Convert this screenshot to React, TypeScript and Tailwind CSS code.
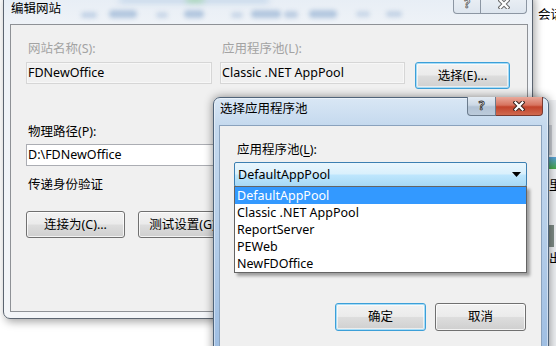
import React from "react";

const btnBase =
  "flex items-center justify-center whitespace-nowrap rounded-[3px] border bg-[linear-gradient(#f2f2f2_0%,#ebebeb_48%,#dddddd_52%,#cfcfcf_100%)]";
const btnNormal = btnBase + " border-[#707070] shadow-[inset_0_0_0_1px_rgba(255,255,255,0.75)]";
const btnFocus =
  btnBase + " border-[#3c9fd8] shadow-[inset_0_0_0_1px_#a6dcf7,inset_0_0_0_2px_rgba(255,255,255,0.6)]";

function XGlyph({ outline, fill }: { outline: string; fill: string }) {
  return (
    <svg width="12" height="10" viewBox="0 0 12 10">
      <path d="M2.5 1.5 L9.5 8.5 M9.5 1.5 L2.5 8.5" stroke={outline} strokeWidth="4.2" strokeLinecap="square" fill="none" />
      <path d="M2.5 1.5 L9.5 8.5 M9.5 1.5 L2.5 8.5" stroke={fill} strokeWidth="2.2" strokeLinecap="square" fill="none" />
    </svg>
  );
}

function OuterWindow() {
  return (
    <div className="absolute left-[3px] top-[-8px] flex h-[327px] w-[530px] flex-col overflow-hidden rounded-[7px] border border-[#5b6470] bg-[linear-gradient(180deg,#e6edf5_0px,#eef2f7_30px,#f3f5f8_100%)] shadow-[2px_3px_9px_rgba(0,0,0,0.35)]">
      {/* glass blur decoration */}
      <div className="absolute left-[115px] top-[4px] h-[6px] w-[150px] rounded-full bg-[#c3d6ea] blur-[3px]" />
      <div className="absolute left-[182px] top-[4px] h-[5px] w-[18px] rounded-full bg-[#9fd6a8] blur-[3px]" />
      <div className="absolute left-[77px] top-[19px] h-[6px] w-[16px] rounded-full bg-[#c2d2e6] blur-[2px]" />
      <div className="absolute left-[105px] top-[17px] h-[8px] w-[28px] rounded-full bg-[#b3c7df] blur-[2px]" />
      <div className="absolute left-[152px] top-[19px] h-[6px] w-[12px] rounded-full bg-[#c9d7e8] blur-[2px]" />
      <div className="absolute left-[180px] top-[17px] h-[8px] w-[20px] rounded-full bg-[#b3c7df] blur-[2px]" />
      <div className="absolute left-[227px] top-[19px] h-[6px] w-[12px] rounded-full bg-[#c9d7e8] blur-[2px]" />
      <div className="absolute left-[247px] top-[17px] h-[8px] w-[30px] rounded-full bg-[#b3c7df] blur-[2px]" />
      <div className="absolute left-[280px] top-[18px] h-[7px] w-[14px] rounded-full bg-[#bccde2] blur-[2px]" />
      <div className="absolute left-[305px] top-[17px] h-[8px] w-[28px] rounded-full bg-[#b3c7df] blur-[2px]" />
      <div className="absolute left-[352px] top-[18px] h-[6px] w-[14px] rounded-full bg-[#c9d7e8] blur-[2px]" />
      <div className="absolute left-[382px] top-[18px] h-[6px] w-[16px] rounded-full bg-[#c3d2e5] blur-[2px]" />

      {/* title bar */}
      <div className="relative flex h-[31px] shrink-0 items-start pl-[7px] pr-[5px]">
        <span className="pt-[8px] whitespace-nowrap leading-[16px] text-black">编辑网站</span>
        <div className="ml-auto flex h-[21px]">
          <div className="flex w-[28px] items-end justify-center rounded-bl-[4px] border border-t-0 border-[#8c96a3] bg-[linear-gradient(#eef2f7,#dde5ee)] pb-[3px]">
            <span className="text-[12px] font-bold leading-[12px] text-white [-webkit-text-stroke:0.8px_#606060]">?</span>
          </div>
          <div className="flex w-[46px] items-end justify-center rounded-br-[4px] border border-l-0 border-t-0 border-[#8c96a3] bg-[linear-gradient(#eef2f7,#dde5ee)] pb-[4px]">
            <XGlyph outline="#6a6a6a" fill="#ffffff" />
          </div>
        </div>
      </div>

      {/* client area */}
      <div className="relative ml-[6px] mr-[4px] h-[288px] shrink-0 border border-[#8e9196] bg-[#f0f0f0] pl-[15px] pt-[16px] leading-[16px]">
        <div className="flex items-start">
          <div className="flex w-[186px] flex-col">
            <span className="ml-[2px] h-[16px] whitespace-nowrap text-[#a3a3a3]">网站名称(S):</span>
            <div className="mt-[5px] flex h-[22px] items-center border border-[#d6d6d6] bg-[#f0f0f0] pl-[1px] shadow-[inset_0_0_0_1px_#f7f7f7]">
              FDNewOffice
            </div>
          </div>
          <div className="ml-[8px] flex w-[185px] flex-col">
            <span className="ml-[2px] h-[16px] whitespace-nowrap text-[#a3a3a3]">应用程序池(L):</span>
            <div className="mt-[5px] flex h-[22px] items-center border border-[#d6d6d6] bg-[#f0f0f0] pl-[1px] shadow-[inset_0_0_0_1px_#f7f7f7]">
              Classic .NET AppPool
            </div>
          </div>
          <div className={"ml-[10px] mt-[21px] h-[27px] w-[95px] " + btnFocus}>选择(E)...</div>
        </div>

        <div className="ml-[2px] mt-[35px] h-[16px] whitespace-nowrap">物理路径(P):</div>
        <div className="mt-[4px] flex h-[22px] w-[379px] items-center border border-[#abadb3] bg-white pl-[1px]">
          D:\FDNewOffice
        </div>
        <div className="ml-[2px] mt-[11px] h-[16px] whitespace-nowrap">传递身份验证</div>
        <div className="mt-[18px] flex gap-[13px]">
          <div className={"h-[27px] w-[99px] " + btnNormal}>连接为(C)...</div>
          <div className={"h-[27px] w-[99px] " + btnNormal}>测试设置(G)...</div>
        </div>
      </div>
    </div>
  );
}

function InnerDialog() {
  const items = ["DefaultAppPool", "Classic .NET AppPool", "ReportServer", "PEWeb", "NewFDOffice"];
  return (
    <div className="absolute left-[213px] top-[97px] flex h-[262px] w-[336px] flex-col rounded-t-[7px] border border-[#4f6379] bg-[linear-gradient(180deg,#d9e7f5_0px,#c5d9ee_27px,#b8d0ea_120px,#9dbde2_100%)] shadow-[0_0_10px_rgba(0,0,0,0.45),inset_0_0_0_1px_rgba(255,255,255,0.45)]">
      {/* title bar */}
      <div className="flex h-[27px] shrink-0 items-start pl-[6px] pr-[5px]">
        <span className="pt-[3px] whitespace-nowrap leading-[16px] text-black">选择应用程序池</span>
        <div className="ml-auto mt-[-1px] flex h-[19px]">
          <div className="flex w-[29px] items-center justify-center rounded-bl-[4px] border border-t-0 border-[#6b7b8d] bg-[linear-gradient(#e3ebf3_0%,#ccd8e5_45%,#b2c2d4_55%,#bccbdb_100%)]">
            <span className="text-[12px] font-bold leading-[12px] text-white [-webkit-text-stroke:0.9px_#3a3a3a]">?</span>
          </div>
          <div className="flex w-[47px] items-center justify-center rounded-br-[4px] border border-l-0 border-t-0 border-[#7a3a30] bg-[linear-gradient(#e9a99b_0%,#d7735f_45%,#c2432b_55%,#d06a50_100%)]">
            <XGlyph outline="#3b2520" fill="#ffffff" />
          </div>
        </div>
      </div>

      {/* client */}
      <div className="ml-[5px] mr-[6px] flex-1 border border-[#8aa2bd] bg-[#f0f0f0] pl-[14px] pr-[14px] pt-[16px] leading-[16px]">
        <div className="ml-[3px] h-[16px] whitespace-nowrap">
          应用程序池(<span className="underline underline-offset-2">L</span>):
        </div>
        <div className="relative mt-[4px] flex h-[25px] w-[293px] items-center rounded-[2px] border border-[#3c7fb1] bg-[linear-gradient(#eaf6fd_0%,#d9f0fc_48%,#bee6fd_52%,#a7d9f5_100%)] pl-[3px] pr-[5px]">
          <span className="whitespace-nowrap">DefaultAppPool</span>
          <svg className="ml-auto" width="9" height="5" viewBox="0 0 9 5">
            <path d="M0 0 H9 L4.5 5 Z" fill="#000" />
          </svg>
          <div className="absolute left-[-1px] top-full w-[293px] border border-[#646464] bg-white shadow-[3px_3px_3px_rgba(0,0,0,0.35)]">
            {items.map((it, i) => (
              <div
                key={it}
                className={
                  "flex h-[17px] items-center whitespace-nowrap pl-[2px] " +
                  (i === 0 ? "bg-[#3399ff] text-white" : "text-black")
                }
              >
                {it}
              </div>
            ))}
          </div>
        </div>
        <div className="mr-[1px] mt-[116px] flex justify-end gap-[9px]">
          <div className={"h-[28px] w-[91px] " + btnFocus}>确定</div>
          <div className={"h-[28px] w-[91px] " + btnNormal}>取消</div>
        </div>
      </div>
    </div>
  );
}

export default function App() {
  return (
    <div className="relative h-[346px] w-[556px] overflow-hidden bg-white font-['Noto_Sans','Noto_Sans_CJK_SC',sans-serif] text-[12.5px] leading-[16px] text-black">
      {/* background app on the right */}
      <div className="absolute left-[546px] top-[-6px] h-[6px] w-[12px] rounded-full bg-[#8a5bb0]" />
      <div className="absolute left-[538px] top-[7px] whitespace-nowrap leading-[16px]">会话</div>
      <div className="absolute left-[549px] top-[100px] flex h-[246px] w-[7px] flex-col bg-[#eef0f3]">
        <div className="mt-[25px] h-[30px] w-[3px] bg-[#c8ccd2]" />
        <div className="mt-[2px] h-[12px] w-[7px] bg-[linear-gradient(#5aa0d8,#49a84a)]" />
        <div className="mt-[10px] h-[14px] overflow-hidden whitespace-nowrap leading-[14px]">里</div>
        <div className="mt-[32px] h-[22px] w-[5px] bg-[#7d8a84]" />
        <div className="mt-[5px] h-[14px] overflow-hidden whitespace-nowrap leading-[14px]">出</div>
      </div>

      <OuterWindow />
      <InnerDialog />
    </div>
  );
}
